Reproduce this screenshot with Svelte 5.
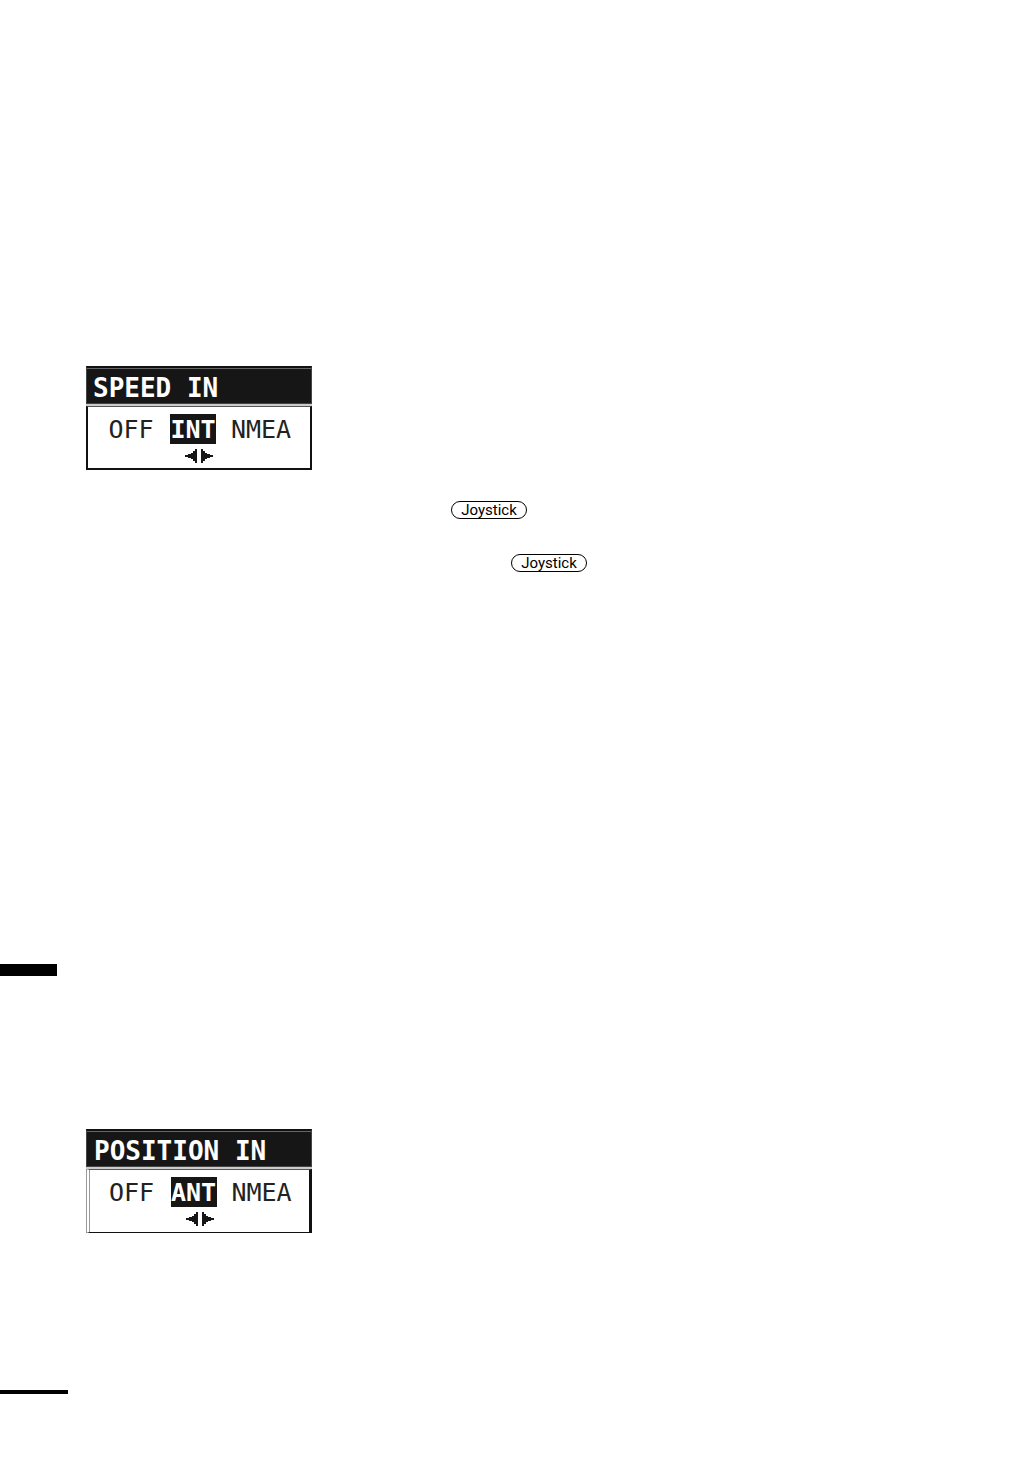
<script>
  let speed = $state('INT');
  let position = $state('ANT');
</script>

{#snippet arrows()}
  <svg class="arrows" viewBox="0 0 28 14" aria-hidden="true" shape-rendering="crispEdges">
    <path d="M0 6h3V5h3V4h2V2h2V0h2v14h-2v-2H8v-2H6V9H3V8H0z" />
    <path d="M28 6h-3V5h-3V4h-2V2h-2V0h-2v14h2v-2h2v-2h2V9h3V8h3z" />
  </svg>
{/snippet}

<main>
  <fieldset class="panel speed">
    <legend class="title">SPEED IN</legend>
    <div class="body">
      <div class="options">
        {#each ['OFF', 'INT', 'NMEA'] as option}
          <label><input type="radio" name="speed" value={option} bind:group={speed} /><span>{option}</span></label>
        {/each}
      </div>
      {@render arrows()}
    </div>
  </fieldset>

  <div class="keys">
    <button type="button">Joystick</button>
    <button type="button" class="second">Joystick</button>
  </div>

  <div class="marker"></div>

  <fieldset class="panel position">
    <legend class="title">POSITION IN</legend>
    <div class="body">
      <div class="options">
        {#each ['OFF', 'ANT', 'NMEA'] as option}
          <label><input type="radio" name="position" value={option} bind:group={position} /><span>{option}</span></label>
        {/each}
      </div>
      {@render arrows()}
    </div>
  </fieldset>

  <div class="rule"></div>
</main>

<style>
  :global(body) {
    margin: 0;
    background: #fff;
  }
  main {
    display: flex;
    flex-direction: column;
    align-items: flex-start;
    padding: 366px 0 64px;
    color: #000;
    font-family: "DejaVu Sans Mono", "Liberation Mono", monospace;
  }
  .panel {
    box-sizing: border-box;
    width: 226px;
    min-width: 0;
    margin: 0 0 0 86px;
    padding: 0;
    border: 0;
  }
  .title {
    box-sizing: border-box;
    width: 100%;
    height: 38px;
    padding: 3px 6px 0;
    border: 1px solid #444;
    border-top: 2px solid #111;
    background: #161616;
    box-shadow: inset 0 1px #666;
    color: #fff;
    font-size: 26px;
    font-weight: 700;
    line-height: 35px;
    white-space: nowrap;
  }
  .body {
    box-sizing: border-box;
    display: flex;
    flex-direction: column;
    align-items: center;
    gap: 5px;
    height: 64px;
    margin-top: 2px;
    padding-top: 7px;
    border: 2px solid #111;
    border-top: 1px solid #555;
    box-shadow: 0 -2px #ccc;
  }
  .options {
    display: grid;
    grid-template-columns: 48px 46px 60px;
    column-gap: 15px;
    color: #222;
    font-size: 25px;
    line-height: 31px;
  }
  .options label {
    position: relative;
    display: flex;
    justify-content: center;
    height: 30px;
    cursor: pointer;
  }
  .options input {
    position: absolute;
    margin: 0;
    opacity: 0;
  }
  .options input:checked + span {
    width: 46px;
    background: #161616;
    color: #fff;
    font-weight: 700;
    text-align: center;
  }
  .arrows {
    width: 28px;
    height: 14px;
    fill: #161616;
  }
  .position .title {
    padding-left: 7px;
  }
  .position .body {
    border-right: 3px solid #111;
    border-bottom-width: 1px;
    border-left: 4px double #999;
  }
  .keys {
    display: flex;
    flex-direction: column;
    gap: 35px;
    margin: 31px 0 392px 451px;
  }
  button {
    box-sizing: border-box;
    width: 76px;
    height: 18px;
    padding: 0;
    border: 1px solid #000;
    border-radius: 9px;
    background: #fff;
    color: #000;
    font: 15px/16px Roboto, "Liberation Sans", sans-serif;
  }
  .second {
    margin-left: 60px;
  }
  .marker {
    width: 57px;
    height: 12px;
    margin-bottom: 153px;
    background: #000;
  }
  .rule {
    width: 68px;
    height: 4px;
    margin-top: 157px;
    background: #000;
  }
</style>
